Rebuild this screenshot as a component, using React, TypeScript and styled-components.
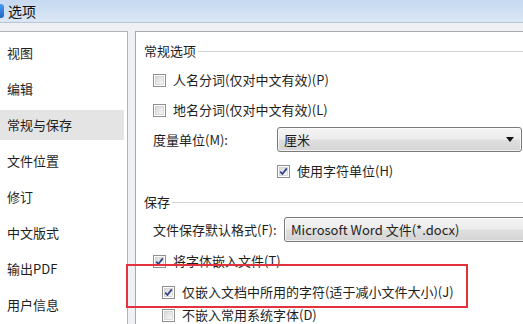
import { createGlobalStyle, styled } from 'styled-components';

const GlobalStyle = createGlobalStyle`
	html, body {
		margin: 0;
		padding: 0;
		background: #ffffff;
	}
	* {
		box-sizing: border-box;
	}
`;

const Window = styled.div`
	position: relative;
	width: 523px;
	height: 324px;
	overflow: hidden;
	display: flex;
	flex-direction: column;
	font-family: 'Noto Sans CJK SC', 'Noto Sans', sans-serif;
	font-size: 13px;
	color: #1e1e1e;
	background: #eef0f3;
`;

const TitleBar = styled.div`
	height: 23px;
	flex-shrink: 0;
	display: flex;
	align-items: center;
	gap: 4px;
	background: linear-gradient(#c6d9f0, #dbe7f5);
	border-bottom: 1px solid #b9c5d3;
	font-size: 14px;
	line-height: 18px;
	color: #111;
`;

const AppIcon = styled.div`
	width: 8px;
	height: 14px;
	margin-left: -4px;
	border-radius: 3px;
	background: linear-gradient(#4a9af0, #1f66c8);
`;

const Frame = styled.div`
	flex: 1;
	display: flex;
	gap: 7px;
	padding-top: 8px;
	min-height: 0;
`;

const Sidebar = styled.div`
	width: 128px;
	flex-shrink: 0;
	background: #ffffff;
	border-top: 1px solid #b4b4b4;
	border-right: 1px solid #b4b4b4;
	padding-top: 6px;
	display: flex;
	flex-direction: column;
	gap: 6px;
`;

const NavItem = styled.div<{ $selected?: boolean }>`
	height: 30px;
	margin-right: 3px;
	padding-left: 7px;
	line-height: 30px;
	white-space: nowrap;
	background: ${({ $selected }) => ($selected ? '#e4e4e4' : 'transparent')};
`;

const Content = styled.div`
	flex: 1;
	background: #ffffff;
	border-top: 1px solid #a9a9a9;
	border-left: 1px solid #a9a9a9;
	padding: 10px 0 0 8px;
	overflow: hidden;
	min-width: 0;
`;

const GroupHeader = styled.div<{ $mt?: number }>`
	height: 18px;
	line-height: 18px;
	margin-top: ${({ $mt }) => $mt ?? 0}px;
	display: flex;
	align-items: center;
	gap: 2px;
	white-space: nowrap;

	&::after {
		content: '';
		flex: 1;
		height: 1px;
		background: #d0d5da;
		box-shadow: 0 1px 0 #ffffff;
	}
`;

const Row = styled.div<{ $mt: number; $indent: number; $tall?: boolean }>`
	height: ${({ $tall }) => ($tall ? 25 : 22)}px;
	margin-top: ${({ $mt }) => $mt}px;
	padding-left: ${({ $indent }) => $indent}px;
	display: flex;
	align-items: center;
	white-space: nowrap;
	line-height: 22px;
`;

const CheckLabel = styled.span`
	margin-left: 7px;
`;

const FieldLabel = styled.span<{ $width: number }>`
	width: ${({ $width }) => $width}px;
	flex-shrink: 0;
`;

const Combo = styled.div<{ $width: number }>`
	width: ${({ $width }) => $width}px;
	flex-shrink: 0;
	height: 25px;
	border: 1px solid #7a7a7a;
	border-radius: 3px;
	background: linear-gradient(#f4f4f4 0%, #ececec 48%, #dfdfdf 52%, #d4d4d4 100%);
	display: flex;
	align-items: center;
	justify-content: space-between;
	padding: 0 7px 0 6px;
	line-height: 22px;
	box-shadow: inset 0 0 0 1px rgba(255, 255, 255, 0.7);
`;

const Arrow = styled.span`
	width: 0;
	height: 0;
	border-left: 4px solid transparent;
	border-right: 4px solid transparent;
	border-top: 5px solid #111;
`;

const Annotation = styled.div`
	position: absolute;
	left: 126px;
	top: 264px;
	width: 342px;
	height: 44px;
	border: 2px solid #e2323d;
	pointer-events: none;
`;

const CheckBox = ({ checked }: { checked?: boolean }) => (
	<svg width="13" height="13" viewBox="0 0 13 13" style={{ flexShrink: 0 }}>
		<defs>
			<linearGradient id="cbg" x1="0" y1="0" x2="1" y2="1">
				<stop offset="0" stopColor="#d8d8d8" />
				<stop offset="1" stopColor="#f8f8f8" />
			</linearGradient>
		</defs>
		<rect x="0.5" y="0.5" width="12" height="12" fill="#ffffff" stroke="#8e8f8f" />
		<rect x="2.5" y="2.5" width="8" height="8" fill="url(#cbg)" stroke="#c4c4c4" strokeWidth="0.6" />
		{checked && (
			<path d="M3.2 6.6 L5.4 9 L9.8 3.4" fill="none" stroke="#2b3f86" strokeWidth="1.7" strokeLinejoin="round" />
		)}
	</svg>
);

const navItems = ['视图', '编辑', '常规与保存', '文件位置', '修订', '中文版式', '输出PDF', '用户信息'];

export default function App() {
	return (
		<>
			<GlobalStyle />
			<Window>
				<TitleBar>
					<AppIcon />
					<span>选项</span>
				</TitleBar>
				<Frame>
					<Sidebar>
						{navItems.map((item) => (
							<NavItem key={item} $selected={item === '常规与保存'}>
								{item}
							</NavItem>
						))}
					</Sidebar>
					<Content>
						<GroupHeader>常规选项</GroupHeader>
						<Row $mt={9} $indent={9}>
							<CheckBox />
							<CheckLabel>人名分词(仅对中文有效)(P)</CheckLabel>
						</Row>
						<Row $mt={8} $indent={9}>
							<CheckBox />
							<CheckLabel>地名分词(仅对中文有效)(L)</CheckLabel>
						</Row>
						<Row $mt={6} $indent={9} $tall>
							<FieldLabel $width={124}>度量单位(M):</FieldLabel>
							<Combo $width={245}>
								<span>厘米</span>
								<Arrow />
							</Combo>
						</Row>
						<Row $mt={8} $indent={133}>
							<CheckBox checked />
							<CheckLabel>使用字符单位(H)</CheckLabel>
						</Row>
						<GroupHeader $mt={11}>保存</GroupHeader>
						<Row $mt={6} $indent={9} $tall>
							<FieldLabel $width={131}>文件保存默认格式(F):</FieldLabel>
							<Combo $width={270}>
								<span>Microsoft Word 文件(*.docx)</span>
								<Arrow />
							</Combo>
						</Row>
						<Row $mt={8} $indent={9}>
							<CheckBox checked />
							<CheckLabel>将字体嵌入文件(T)</CheckLabel>
						</Row>
						<Row $mt={9} $indent={18}>
							<CheckBox checked />
							<CheckLabel>仅嵌入文档中所用的字符(适于减小文件大小)(J)</CheckLabel>
						</Row>
						<Row $mt={1} $indent={18}>
							<CheckBox />
							<CheckLabel>不嵌入常用系统字体(D)</CheckLabel>
						</Row>
					</Content>
				</Frame>
				<Annotation />
			</Window>
		</>
	);
}
